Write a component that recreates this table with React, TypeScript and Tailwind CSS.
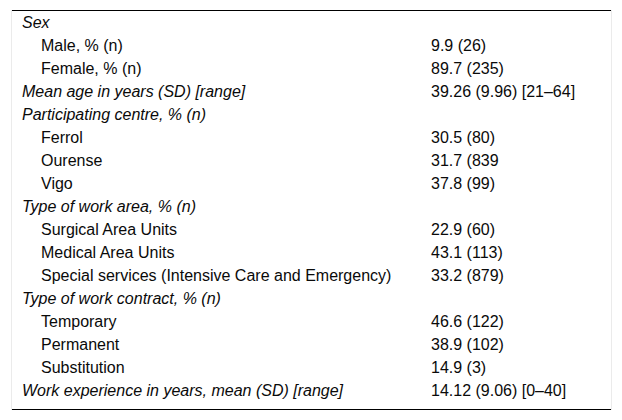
import React from "react";

type Row = { label: string; value?: string; head?: boolean };

const rows: Row[] = [
  { label: "Sex", head: true },
  { label: "Male, % (n)", value: "9.9 (26)" },
  { label: "Female, % (n)", value: "89.7 (235)" },
  { label: "Mean age in years (SD) [range]", value: "39.26 (9.96) [21–64]", head: true },
  { label: "Participating centre, % (n)", head: true },
  { label: "Ferrol", value: "30.5 (80)" },
  { label: "Ourense", value: "31.7 (839" },
  { label: "Vigo", value: "37.8 (99)" },
  { label: "Type of work area, % (n)", head: true },
  { label: "Surgical Area Units", value: "22.9 (60)" },
  { label: "Medical Area Units", value: "43.1 (113)" },
  { label: "Special services (Intensive Care and Emergency)", value: "33.2 (879)" },
  { label: "Type of work contract, % (n)", head: true },
  { label: "Temporary", value: "46.6 (122)" },
  { label: "Permanent", value: "38.9 (102)" },
  { label: "Substitution", value: "14.9 (3)" },
  { label: "Work experience in years, mean (SD) [range]", value: "14.12 (9.06) [0–40]", head: true },
];

export default function App() {
  return (
    <div className="w-[622px] h-[420px] bg-white pl-[11px] pt-[10px] font-['Liberation_Sans',Arial,sans-serif] text-[16px] text-[#0a0a0a]">
      <div className="w-[601px] border-x border-[#ebebeb]">
        <div className="border-t border-b border-black pb-[7px]">
          {rows.map((r, i) => (
            <div key={i} className="flex h-[23px] items-center leading-[23px] whitespace-nowrap">
              <div className={`w-[410px] shrink-0 ${r.head ? "pl-[10px] italic" : "pl-[29px]"}`}>
                {r.label}
              </div>
              <div className="pl-[9px]">{r.value ?? ""}</div>
            </div>
          ))}
        </div>
      </div>
    </div>
  );
}
